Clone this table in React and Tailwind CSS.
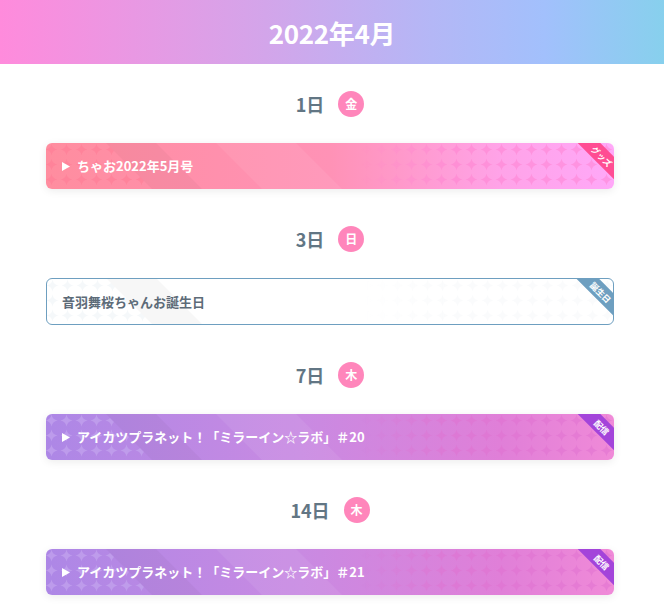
import React from 'react';

const days = [
  {
    day: '1日',
    week: '金',
    title: 'ちゃお2022年5月号',
    type: 'goods',
  },
  {
    day: '3日',
    week: '日',
    title: '音羽舞桜ちゃんお誕生日',
    type: 'birthday',
  },
  {
    day: '7日',
    week: '木',
    title: 'アイカツプラネット！「ミラーイン☆ラボ」＃20',
    type: 'stream',
  },
  {
    day: '14日',
    week: '木',
    title: 'アイカツプラネット！「ミラーイン☆ラボ」＃21',
    type: 'stream',
  },
];

const styles = {
  goods: {
    card: 'h-[46px] bg-[linear-gradient(90deg,#ff8d9f_0%,#ff92b6_50%,#ffa3e8_80%,#ffa8f8_100%)] text-white shadow-[0_2px_8px_rgba(0,0,0,0.08)]',
    ribbon: 'bg-[#ff4d93]',
    label: 'グッズ',
    star: '#ff7fd0',
    starLeft: '#ff7f98',
    op: 0.5,
  },
  birthday: {
    card: 'h-[47px] bg-white border border-[#6e9fc0] text-[#5d6b78]',
    ribbon: 'bg-[#6e9fc0]',
    label: '誕生日',
    star: '#e6edf2',
    starLeft: '#e6edf2',
    op: 0.2,
  },
  stream: {
    card: 'h-[46px] bg-[linear-gradient(90deg,#ad87e6_0%,#c98ae2_45%,#e07fd8_80%,#f08ad8_100%)] text-white shadow-[0_2px_8px_rgba(0,0,0,0.08)]',
    ribbon: 'bg-[#a344da]',
    label: '配信',
    star: '#e070d0',
    starLeft: '#c4a4ee',
    op: 0.5,
  },
};

const star = 'M7.5 1.5 Q8.3 6.7 13.5 7.5 Q8.3 8.3 7.5 13.5 Q6.7 8.3 1.5 7.5 Q6.7 6.7 7.5 1.5Z';

function Pattern({ id, s }) {
  return (
    <svg className="absolute inset-0 w-full h-full" preserveAspectRatio="none">
      <defs>
        <pattern id={`p-${id}`} width="15" height="15" patternUnits="userSpaceOnUse" x="-2" y="-1">
          <path d={star} fill={s.star} opacity={s.op} />
        </pattern>
        <pattern id={`pl-${id}`} width="15" height="15" patternUnits="userSpaceOnUse" x="-2" y="-1">
          <path d={star} fill={s.starLeft} opacity={s.op + 0.2} />
        </pattern>
        <linearGradient id={`g-${id}`} x1="0" x2="1" y1="0" y2="0">
          <stop offset="0.55" stopColor="#fff" stopOpacity="0" />
          <stop offset="0.72" stopColor="#fff" stopOpacity="1" />
        </linearGradient>
        <mask id={`m-${id}`}>
          <rect width="100%" height="100%" fill={`url(#g-${id})`} />
        </mask>
      </defs>
      <polygon points="0,0 60,0 106,46 0,46" fill={`url(#pl-${id})`} />
      <polygon points="60,0 110,0 156,46 106,46" fill="#000" opacity="0.03" />
      <polygon points="170,0 250,0 296,46 216,46" fill="#fff" opacity="0.07" />
      <rect width="100%" height="100%" fill={`url(#p-${id})`} mask={`url(#m-${id})`} />
    </svg>
  );
}

function Card({ item, idx }) {
  const s = styles[item.type];
  return (
    <div className={`relative rounded-[6px] overflow-hidden flex items-center ${s.card}`}>
      <Pattern id={idx} s={s} />
      <div className={`relative flex items-center gap-[7px] text-[13px] font-bold ${item.type === 'birthday' ? 'pl-[15px]' : 'pl-[16px]'}`}>
        {item.type !== 'birthday' && (
          <svg width="8" height="9" viewBox="0 0 8 9">
            <polygon points="0,0 8,4.5 0,9" fill="#fff" />
          </svg>
        )}
        <span>{item.title}</span>
      </div>
      <div
        className={`absolute -right-[23px] top-[5px] w-[70px] h-[16px] rotate-45 flex items-center justify-center text-white text-[8.5px] font-bold leading-none tracking-[-0.2px] ${s.ribbon}`}
      >
        {s.label}
      </div>
    </div>
  );
}

export default function App() {
  return (
    <div className="w-[664px] h-[610px] overflow-hidden bg-white font-['Noto_Sans_CJK_JP','Noto_Sans',sans-serif]">
      <header className="h-[64px] flex items-center justify-center bg-[linear-gradient(90deg,#ff8bdc_0%,#d3a5ea_40%,#b4b7f6_65%,#a2c0fc_82%,#87d0ed_100%)]">
        <h1 className="text-white text-[26px] font-bold tracking-[-0.3px]">2022年4月</h1>
      </header>
      <main className="pl-[46px] pr-[50px] pt-[27px]">
        {days.map((d, i) => (
          <section key={i} className="mb-[37px]">
            <div className="h-[26px] flex items-center justify-center gap-[14px] mb-[26px]">
              <span className="text-[18px] font-bold text-[#627684]">{d.day}</span>
              <span className="w-[26px] h-[26px] rounded-full bg-[#ff86bb] text-white text-[12px] font-bold flex items-center justify-center">
                {d.week}
              </span>
            </div>
            <Card item={d} idx={i} />
          </section>
        ))}
      </main>
    </div>
  );
}
